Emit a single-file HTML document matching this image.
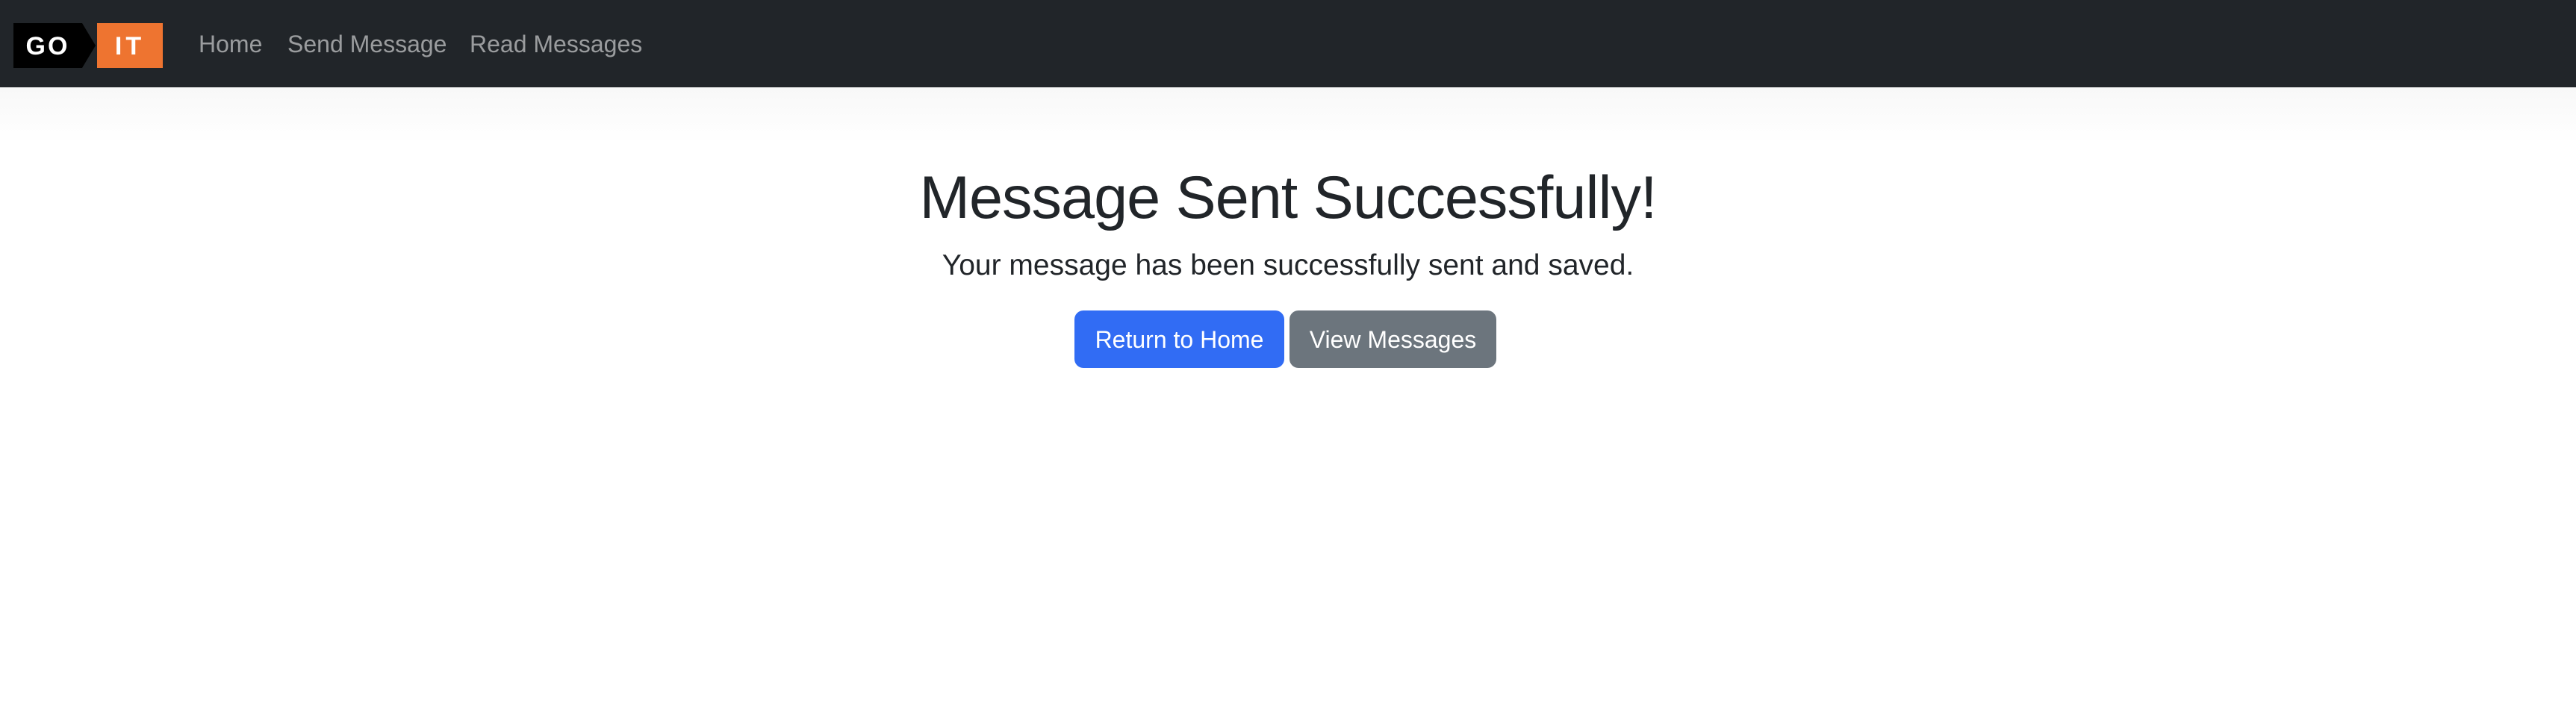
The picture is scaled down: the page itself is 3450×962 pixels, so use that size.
<!DOCTYPE html>
<html><head><meta charset="utf-8"><style>
*{margin:0;padding:0;box-sizing:border-box}
body{width:3450px;height:962px;background:#fff;font-family:"Liberation Sans",sans-serif;overflow:hidden;position:relative}
nav{position:absolute;left:0;top:0;width:3450px;height:117px;background:#212529}
.band{position:absolute;left:0;top:117px;width:3450px;height:75px;background:linear-gradient(#f8f8f8,#fff)}
.logo{position:absolute;left:18px;top:31px;width:200px;height:60px}
.nl{position:absolute;top:37px;font-size:32px;color:rgba(255,255,255,.55);line-height:44px;white-space:nowrap}
.c{position:absolute;left:0;width:3450px;text-align:center;color:#212529;white-space:nowrap}
.btn{position:absolute;top:416px;height:77px;border-radius:12px;color:#fff;font-size:32px;line-height:79px;text-align:center}
</style></head><body>
<nav>
<svg class="logo" viewBox="0 0 200 60"><polygon points="0,0 92,0 110,30 92,60 0,60" fill="#000"/><rect x="112" y="0" width="88" height="60" fill="#ee7430"/>
<text x="46" y="42" text-anchor="middle" font-family="Liberation Sans" font-weight="bold" font-size="34" fill="#fff" letter-spacing="3">GO</text>
<text x="156" y="42" text-anchor="middle" font-family="Liberation Sans" font-weight="bold" font-size="34" fill="#fff" letter-spacing="5">IT</text></svg>
<div class="nl" style="left:266px">Home</div>
<div class="nl" style="left:385px">Send Message</div>
<div class="nl" style="left:629px">Read Messages</div>
</nav>
<div class="band"></div>
<div class="c" style="top:215px;font-size:81px;line-height:100px;font-weight:500;letter-spacing:-1px">Message Sent Successfully!</div>
<div class="c" style="top:330px;font-size:39px;line-height:52px">Your message has been successfully sent and saved.</div>
<div class="btn" style="left:1439px;width:281px;background:#316cf4">Return to Home</div>
<div class="btn" style="left:1727px;width:277px;background:#6c757d">View Messages</div>
</body></html>
